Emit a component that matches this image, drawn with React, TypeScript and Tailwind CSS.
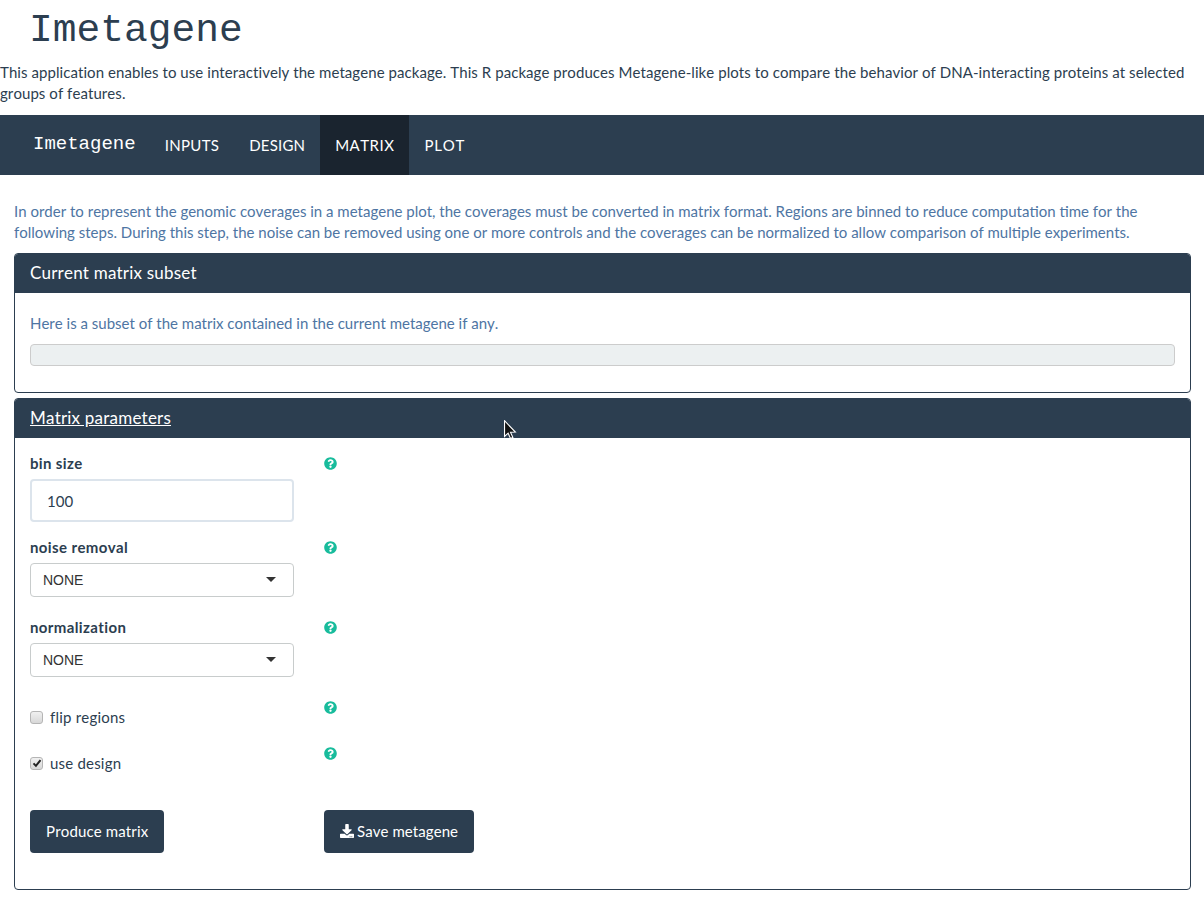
import React from 'react';
import { FaQuestionCircle, FaDownload } from 'react-icons/fa';

const navItems = [
  { label: 'INPUTS', className: 'tracking-[0.33px]' },
  { label: 'DESIGN', className: 'tracking-[0.17px]' },
  { label: 'MATRIX', className: 'tracking-[0.5px] bg-[#1a242f]' },
  { label: 'PLOT', className: 'tracking-[0.75px]' },
];

const Help: React.FC = () => <FaQuestionCircle className="w-[13px] h-[13px] text-[#18bc9c]" />;

const Panel: React.FC<{ title: React.ReactNode; className: string; children: React.ReactNode }> = ({ title, className, children }) => (
  <div className={`border border-[#2c3e50] rounded-[4px] overflow-hidden ${className}`}>
    <div className="h-[39px] bg-[#2c3e50] text-white text-[17px] leading-[38px] px-[15px] tracking-[0.2px]">{title}</div>
    {children}
  </div>
);

const SelectField: React.FC<{ label: string }> = ({ label }) => (
  <div className="flex h-[80px]">
    <div className="w-[264px]">
      <div className="font-bold text-[15px] leading-[21px] h-[26px] tracking-[0.38px]">{label}</div>
      <div className="h-[34px] border border-[#c8cccc] rounded-[4px] flex items-center justify-between pl-[12px] pr-[17px] font-['Liberation_Sans',sans-serif] text-[14px] text-[#333]">
        <span className="pt-[2px]">NONE</span>
        <span className="w-0 h-0 border-x-[5px] border-x-transparent border-t-[5px] border-t-[#333]" />
      </div>
    </div>
    <div className="ml-[30px] pt-[4px]"><Help /></div>
  </div>
);

const CheckField: React.FC<{ label: string; checked?: boolean; height: string }> = ({ label, checked, height }) => (
  <div className={`flex ${height}`}>
    <div className="w-[264px] flex items-start pt-[10px] gap-[7px] text-[15px] leading-[21px] tracking-[0.2px]">
      <span className="mt-[4px] w-[13px] h-[13px] rounded-[3px] border border-[#b5b5b5] bg-gradient-to-b from-[#f0f0f0] to-[#d8d8d8] flex items-center justify-center">
        {checked && (
          <svg viewBox="0 0 12 12" className="w-[10px] h-[10px]">
            <path d="M1.8 6.5 L4.7 9.4 L10.2 2.6" fill="none" stroke="#222" strokeWidth="2.4" />
          </svg>
        )}
      </span>
      {label}
    </div>
    <div className="ml-[30px] pt-[4px]"><Help /></div>
  </div>
);

export default function App() {
  return (
    <div className="relative w-[1204px] h-[901px] overflow-hidden bg-white text-[#2c3e50] font-['Lato',sans-serif] text-[15px] leading-[21.43px] [font-kerning:none]">
      {/* Title */}
      <h1 className="h-[62px] pl-[29px] font-['Liberation_Mono',monospace] text-[39.6px] leading-[62px]">Imetagene</h1>
      <p className="tracking-[0.065px]">
        This application enables to use interactively the metagene package. This R package produces Metagene-like plots to compare the behavior of DNA-interacting proteins at selected groups of features.
      </p>

      {/* Navbar */}
      <nav className="mt-[10px] h-[60px] bg-[#2c3e50] flex pl-[15px] text-white">
        <span className="pl-[18px] pr-[14px] font-['Liberation_Mono',monospace] text-[19px] leading-[59px]">Imetagene</span>
        {navItems.map((item) => (
          <span key={item.label} className={`px-[15px] leading-[60px] ${item.className}`}>
            {item.label}
          </span>
        ))}
      </nav>

      <div className="pl-[14px] pr-[13px] pt-[26px]">
        <p className="text-[#4e75a3] mb-[9px]">
          In order to represent the genomic coverages in a metagene plot, the coverages must be converted in matrix format. Regions are binned to reduce computation time for the following steps. During this step, the noise can be removed using one or more controls and the coverages can be normalized to allow comparison of multiple experiments.
        </p>

        <Panel title="Current matrix subset" className="h-[140px] mb-[5px]">
          <div className="px-[15px] pt-[20px]">
            <p className="text-[#4e75a3] mb-[10px]">Here is a subset of the matrix contained in the current metagene if any.</p>
            <div className="h-[22px] rounded-[4px] bg-[#ecf0f1] border border-[#cccccc]" />
          </div>
        </Panel>

        <Panel title={<span className="underline">Matrix parameters</span>} className="h-[492px]">
          <div className="px-[15px] pt-[15px]">
            <div className="flex h-[84px]">
              <div className="w-[264px]">
                <div className="font-bold leading-[21px] h-[26px] tracking-[0.35px]">bin size</div>
                <div className="h-[43px] border-2 border-[#dce4ec] rounded-[4px] pl-[15px] leading-[41px]">100</div>
              </div>
              <div className="ml-[30px] pt-[4px]"><Help /></div>
            </div>
            <SelectField label="noise removal" />
            <SelectField label="normalization" />
            <CheckField label="flip regions" height="h-[46px]" />
            <CheckField label="use design" checked height="h-[67px]" />
            <div className="flex">
              <div className="w-[294px]">
                <button className="h-[43px] px-[16px] rounded-[4px] bg-[#2c3e50] text-white tracking-[0.14px]">Produce matrix</button>
              </div>
              <button className="h-[43px] px-[16px] rounded-[4px] bg-[#2c3e50] text-white flex items-center gap-[3px] tracking-[0.07px]">
                <FaDownload className="w-[14px] h-[14px]" />
                Save metagene
              </button>
            </div>
          </div>
        </Panel>
      </div>

      {/* Mouse pointer caught in the screenshot */}
      <svg viewBox="0 0 12 20" className="absolute left-[504px] top-[420px] w-[13px] h-[22px]">
        <path d="M0.5 0.5 L0.5 15 L3.8 12 L6 17 L8.2 16 L6 11.2 L10.5 11 Z" fill="#111" stroke="#fff" strokeWidth="1" />
      </svg>
    </div>
  );
}
